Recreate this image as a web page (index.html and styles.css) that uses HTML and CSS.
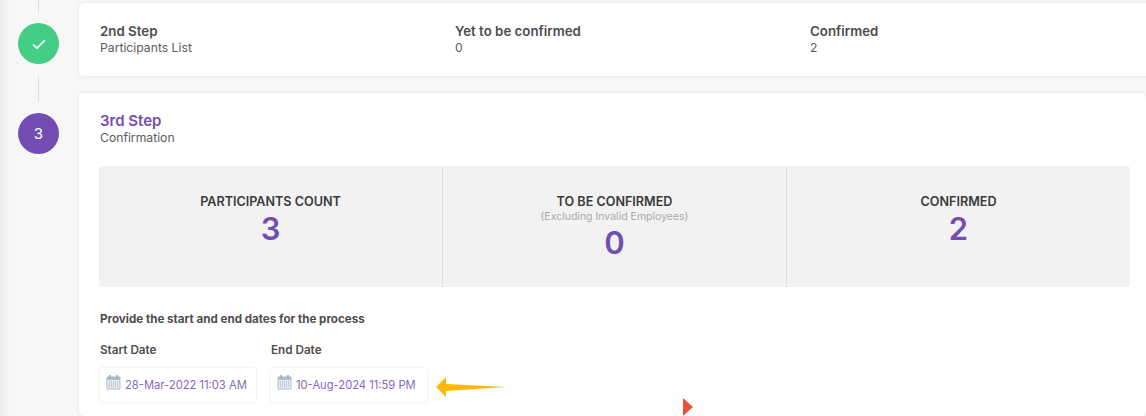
FILE: index.html
```html
<!DOCTYPE html>
<html lang="en">
<head>
  <meta charset="UTF-8">
  <title>Process Steps</title>
  <link rel="stylesheet" href="styles.css">
</head>
<body>

  <div class="steps">

    <!-- 2nd step -->
    <section class="step step-done">
      <div class="rail">
        <span class="line line-top"></span>
        <span class="circle circle-done">
          <svg width="16" height="16" viewBox="0 0 16 16"><path d="M2 8.5 L6 12.2 L14 4" fill="none" stroke="#fff" stroke-width="1.7"/></svg>
        </span>
        <span class="line line-fill"></span>
      </div>
      <div class="card card-short">
        <div class="col">
          <h3>2nd Step</h3>
          <p>Participants List</p>
        </div>
        <div class="col">
          <h3>Yet to be confirmed</h3>
          <p>0</p>
        </div>
        <div class="col">
          <h3>Confirmed</h3>
          <p>2</p>
        </div>
      </div>
    </section>

    <!-- 3rd step -->
    <section class="step step-current">
      <div class="rail">
        <span class="line line-lead"></span>
        <span class="circle circle-current">3</span>
      </div>
      <div class="card card-tall">
        <h3 class="purple">3rd Step</h3>
        <p>Confirmation</p>

        <div class="stats">
          <div class="stat">
            <h4>PARTICIPANTS COUNT</h4>
            <strong>3</strong>
          </div>
          <div class="stat">
            <h4>TO BE CONFIRMED</h4>
            <small>(Excluding Invalid Employees)</small>
            <strong>0</strong>
          </div>
          <div class="stat">
            <h4>CONFIRMED</h4>
            <strong>2</strong>
          </div>
        </div>

        <h5 class="dates-title">Provide the start and end dates for the process</h5>

        <div class="dates">
          <div class="date">
            <label>Start Date</label>
            <div class="date-box">
              <svg class="cal" width="15" height="16" viewBox="0 0 15 16"><path d="M1 3h13v12H1z" fill="#e6e9ef" stroke="#b4bbc8"/><path d="M1 3h13v3H1z" fill="#b4bbc8"/><path d="M4 1v3M11 1v3" stroke="#98a1b0" stroke-width="1.4"/><path d="M3 8h9M3 10h9M3 12h9" stroke="#a6aebb" stroke-dasharray="1 1"/></svg>
              28-Mar-2022 11:03 AM
            </div>
          </div>
          <div class="date">
            <label>End Date</label>
            <div class="date-box">
              <svg class="cal" width="15" height="16" viewBox="0 0 15 16"><path d="M1 3h13v12H1z" fill="#e6e9ef" stroke="#b4bbc8"/><path d="M1 3h13v3H1z" fill="#b4bbc8"/><path d="M4 1v3M11 1v3" stroke="#98a1b0" stroke-width="1.4"/><path d="M3 8h9M3 10h9M3 12h9" stroke="#a6aebb" stroke-dasharray="1 1"/></svg>
              10-Aug-2024 11:59 PM
            </div>
          </div>
        </div>
      </div>
    </section>
  </div>

  <!-- Annotations drawn over the screenshot -->
  <svg class="arrow" width="70" height="20" viewBox="0 0 70 20"><path d="M0 10 L10 0 V7 L70 10 L10 14 V20 Z" fill="#fdb90b"/></svg>
  <svg class="marker" width="11" height="18" viewBox="0 0 11 18"><path d="M0 0 L10 9 L0 18 Z" fill="#e8533a"/></svg>

</body>
</html>
```

FILE: styles.css
```css
/* Base */
body {
  margin: 0;
  height: 416px;
  overflow: hidden;
  position: relative;
  background: linear-gradient(to right, #ececec 0, #f7f7f7 10px);
  font-family: 'Inter', 'Liberation Sans', sans-serif;
  color: #4d4d4d;
}

h3, h4, h5, p {
  margin: 0;
}

/* Step layout */
.step {
  display: flex;
}

.rail {
  width: 78px;
  flex: none;
  display: flex;
  flex-direction: column;
  align-items: center;
}

.line {
  width: 1px;
  margin-right: 1px;
  background: #dedede;
}

.line-top { height: 13px; margin-bottom: 10px; }
.line-fill { flex: 1; margin-top: 12px; }
.line-lead { height: 17px; margin-bottom: 11px; }

.circle {
  width: 41px;
  height: 41px;
  margin-right: 1px;
  border-radius: 50%;
  display: flex;
  align-items: center;
  justify-content: center;
  color: #fff;
  font-size: 15px;
}

.circle-done { background: #43cd85; }
.circle-current { background: #734db3; }

/* Cards */
.card {
  flex: 1;
  margin-left: 1px;
  background: #fff;
  border-radius: 5px;
  box-shadow: 0 0 4px rgba(0, 0, 0, 0.09);
}

.card h3 {
  font-size: 13.3px;
  font-weight: 600;
  line-height: 17px;
}

.card p {
  font-size: 12.2px;
  line-height: 16px;
  color: #5c5c5c;
}

.card-short {
  margin-top: 3px;
  margin-bottom: 9px;
  height: 73px;
  box-sizing: border-box;
  padding: 20px 21px;
  display: flex;
}

.col {
  width: 355px;
}

.card-tall {
  margin-top: 8px;
  padding: 19px 16px 0 20px;
  height: 323px;
  box-sizing: border-box;
}

.card-tall h3 {
  margin-left: 1px;
  font-size: 15px;
}

.card-tall h3 + p {
  margin: 1px 0 0 1px;
}

.purple {
  color: #734db3;
}

/* Stats panel */
.stats {
  margin-top: 20px;
  height: 121px;
  background: #f2f2f2;
  border-radius: 3px;
  display: flex;
}

.stat {
  flex: 1;
  box-sizing: border-box;
  padding-top: 28px;
  display: flex;
  flex-direction: column;
  align-items: center;
  border-right: 1px solid #dedede;
}

.stat:last-child {
  border-right: none;
}

.stat h4 {
  font-size: 12.6px;
  font-weight: 600;
  line-height: 16px;
  color: #3b3b3b;
}

.stat small {
  font-size: 10.5px;
  line-height: 14px;
  color: #aaa;
}

.stat strong {
  font-size: 31px;
  font-weight: 600;
  line-height: 38px;
  color: #734db3;
}

/* Dates */
.dates-title {
  margin: 25px 0 0 1px;
  font-size: 11.6px;
  font-weight: 700;
  line-height: 14px;
}

.dates {
  margin: 17px 0 0 1px;
  display: flex;
  gap: 15px;
}

.date label {
  display: block;
  margin-bottom: 11px;
  font-size: 11.7px;
  font-weight: 600;
  line-height: 14px;
}

.date-box {
  width: 156px;
  height: 34px;
  box-sizing: border-box;
  padding-left: 6px;
  display: flex;
  align-items: center;
  gap: 4px;
  background: #fff;
  border-radius: 3px;
  box-shadow: 0 0 3px rgba(0, 0, 0, 0.13);
  font-size: 11.2px;
  color: #8667bf;
  white-space: nowrap;
}

.cal {
  flex: none;
  margin-top: -6px;
}

/* Annotations */
.arrow {
  position: absolute;
  left: 436px;
  top: 377px;
}

.marker {
  position: absolute;
  left: 683px;
  top: 398px;
}
```
